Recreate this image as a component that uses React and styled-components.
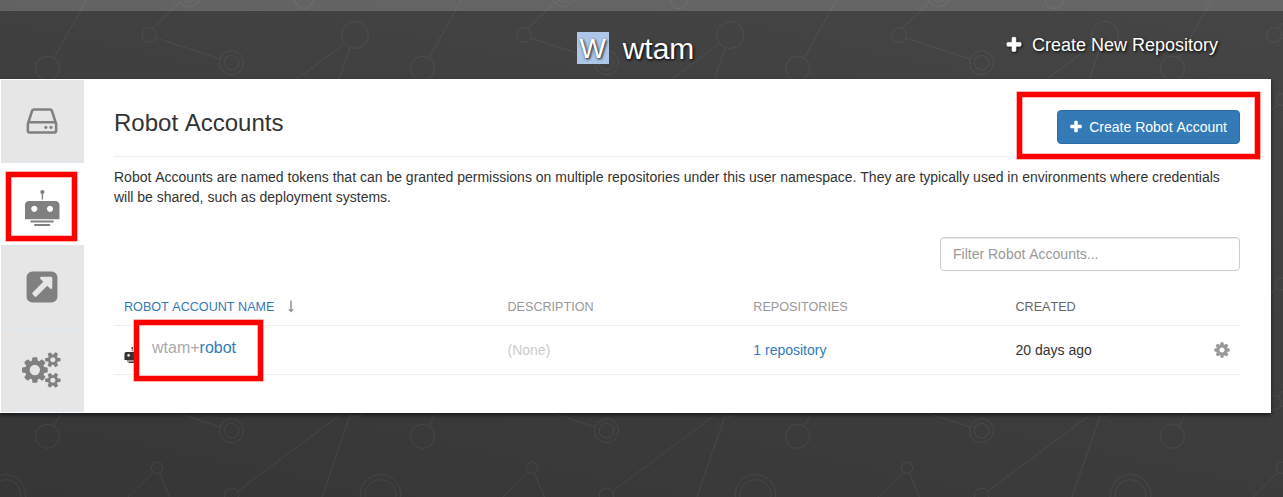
import React from "react";
import styled, { createGlobalStyle } from "styled-components";

const GlobalStyle = createGlobalStyle`
  * { box-sizing: border-box; }
  body {
    margin: 0;
    overflow: hidden;
    font: 14px/20px "Liberation Sans", Arial, sans-serif;
    font-kerning: none;
    color: #333;
    background: #3c3c3c;
  }
`;

const Page = styled.div`
  position: relative;
  height: 497px;
  overflow: hidden;
  background: linear-gradient(192deg, #454545 0%, #414141 32%, #363636 100%);
`;

const Backdrop = styled.svg`
  position: absolute;
  inset: 0;
  width: 100%;
  height: 100%;
  fill: none;
  stroke: rgba(255, 255, 255, 0.06);
`;

const Body = styled.div`
  position: relative;
`;

const TopStrip = styled.div`
  height: 11px;
  background: rgba(255, 255, 255, 0.18);
`;

const Header = styled.header`
  display: grid;
  grid-template-columns: 1fr auto 1fr;
  width: 1271px;
  height: 68px;
  color: #fff;
  text-shadow: 1px 1px 3px #000;
`;

const Title = styled.h1`
  grid-column: 2;
  display: flex;
  gap: 14px;
  margin: 0;
  padding-top: 21px;
  font-size: 30px;
  line-height: 34px;
  font-weight: 400;
`;

const Avatar = styled.span`
  width: 32px;
  height: 32px;
  background: #aec7e8;
  font-size: 28px;
  line-height: 33px;
  text-align: center;
`;

const CreateLink = styled.a`
  justify-self: end;
  display: flex;
  gap: 9px;
  align-items: center;
  height: 26px;
  margin: 21px 53px 0 0;
  font-size: 18px;
`;

const Glyph = styled.svg`
  display: block;
  flex: none;
  width: ${(p) => p.$w || p.$size}px;
  height: ${(p) => p.$size}px;
  fill: currentColor;
  overflow: visible;
  filter: ${(p) => (p.$shadow ? "drop-shadow(1px 1px 1px rgba(0,0,0,.8))" : "none")};
`;

const Panel = styled.main`
  display: flex;
  width: 1271px;
  height: 334px;
  background: #fff;
  box-shadow: 0 2px 4px rgba(0, 0, 0, 0.6);
`;

const Tabs = styled.nav`
  flex: none;
  width: 83px;
  margin: 1px 0 0 1px;
`;

const Tab = styled.div`
  position: relative;
  display: flex;
  align-items: center;
  justify-content: center;
  height: 83px;
  padding: ${(p) => (p.$active ? "7px" : 0)} 2px 0 0;
  color: #808080;
  background: ${(p) => (p.$active ? "#fff" : "#e6e6e6")};
  border-bottom: 1px solid #dde8f0;
`;

const Content = styled.section`
  width: 1126px;
  margin-left: 30px;
`;

const Heading = styled.div`
  display: flex;
  justify-content: space-between;
  height: 78px;
  padding-top: 31px;
  border-bottom: 1px solid #eee;
`;

const H2 = styled.h2`
  margin: 0;
  font-size: 24px;
  line-height: 26px;
  font-weight: 400;
`;

const Button = styled.button`
  display: flex;
  align-items: center;
  justify-content: flex-end;
  gap: 6px;
  width: 183px;
  height: 34px;
  padding: 0 12px;
  border: 1px solid #2e6da4;
  border-radius: 4px;
  background: #337ab7;
  color: #fff;
  font: inherit;
  font-kerning: none;
  white-space: nowrap;
`;

const Intro = styled.p`
  margin: 10px 0 0;
`;

const FilterRow = styled.div`
  display: flex;
  justify-content: flex-end;
  margin: 30px 0 19px;
`;

const Filter = styled.input`
  width: 300px;
  height: 34px;
  padding: 6px 12px;
  border: 1px solid #ccc;
  border-radius: 4px;
  box-shadow: inset 0 1px 1px rgba(0, 0, 0, 0.075);
  font: inherit;
  font-kerning: none;
  &::placeholder { color: #999; opacity: 1; }
`;

const Row = styled.div`
  position: relative;
  display: grid;
  grid-template-columns: 383.5px 245.8px 262.2px 1fr 27px;
  align-items: center;
  height: ${(p) => (p.$head ? 36 : 49)}px;
  padding-bottom: ${(p) => (p.$head ? 2 : 0)}px;
  border-bottom: 1px solid #eee;
  font-size: ${(p) => (p.$head ? 12.6 : 14)}px;
`;

const Cell = styled.div`
  display: flex;
  align-items: center;
  gap: 13px;
  padding-left: 10px;
  color: ${(p) => p.$color || "#333"};
`;

const SortMark = styled.span`
  color: #999;
`;

const RobotMark = styled.span`
  padding-top: 9px;
`;

const ActionCell = styled.div`
  color: #999;
`;

const Callout = styled.div`
  position: absolute;
  left: ${(p) => p.$x}px;
  top: ${(p) => p.$y}px;
  width: ${(p) => p.$w}px;
  height: ${(p) => p.$h}px;
  border: 5px solid #f00;
  box-shadow: 0 0 0 .6px rgba(255, 0, 0, .5), inset 0 0 0 .6px rgba(255, 0, 0, .5);
  pointer-events: none;
`;

const NameCallout = styled(Callout)`
  padding: 13px 0 0 13px;
  background: #fff;
  font-size: 16px;
  color: #aaa;
  span { color: #337ab7; }
`;

const paths = {
  plus: "M1600 736v192q0 40-28 68t-68 28h-416v416q0 40-28 68t-68 28h-192q-40 0-68-28t-28-68v-416h-416q-40 0-68-28t-28-68v-192q0-40 28-68t68-28h416v-416q0-40 28-68t68-28h192q40 0 68 28t28 68v416h416q40 0 68 28t28 68z",
  cog: "M1152 896q0-106-75-181t-181-75-181 75-75 181 75 181 181 75 181-75 75-181zm512-109v222q0 12-8 23t-20 13l-185 28q-19 54-39 91 35 50 107 138 10 12 10 25t-9 23q-27 37-99 108t-94 71q-12 0-26-9l-138-108q-44 23-91 38-16 136-29 186-7 28-36 28h-222q-14 0-24.5-8.5t-11.5-21.5l-28-184q-49-16-90-37l-141 107q-10 9-25 9-14 0-25-11-126-114-165-168-7-10-7-23 0-12 8-23 15-21 51-66.5t54-70.5q-27-50-41-99l-183-27q-13-2-21-12.5t-8-23.5v-222q0-12 8-23t19-13l186-28q14-46 39-92-40-57-107-138-10-12-10-24 0-10 9-23 26-36 98.5-107.5t94.5-71.5q13 0 26 10l138 107q44-23 91-38 16-136 29-186 7-28 36-28h222q14 0 24.5 8.5t11.5 21.5l28 184q49 16 90 37l142-107q9-9 24-9 13 0 25 10 129 119 165 170 7 8 7 22 0 12-8 23-15 21-51 66.5t-54 70.5q26 50 41 98l183 28q13 2 21 12.5t8 23.5z",
  external: "M1408 928v-480q0-26-19-45t-45-19h-480q-42 0-59 39-17 41 14 70l144 144-534 534q-19 19-19 45t19 45l102 102q19 19 45 19t45-19l534-534 144 144q18 19 45 19 12 0 25-5 39-17 39-59zm256-512v960q0 119-84.5 203.5t-203.5 84.5h-960q-119 0-203.5-84.5t-84.5-203.5v-960q0-119 84.5-203.5t203.5-84.5h960q119 0 203.5 84.5t84.5 203.5z",
  drive: "M1168 1216q0 33-23.5 56.5t-56.5 23.5-56.5-23.5-23.5-56.5 23.5-56.5 56.5-23.5 56.5 23.5 23.5 56.5zm256 0q0 33-23.5 56.5t-56.5 23.5-56.5-23.5-23.5-56.5 23.5-56.5 56.5-23.5 56.5 23.5 23.5 56.5zm112 160v-320q0-13-9.5-22.5t-22.5-9.5h-1216q-13 0-22.5 9.5t-9.5 22.5v320q0 13 9.5 22.5t22.5 9.5h1216q13 0 22.5-9.5t9.5-22.5zm-1230-480h1180l-157-482q-4-13-16-21.5t-26-8.5h-782q-14 0-26 8.5t-16 21.5zm1358 160v320q0 66-47 113t-113 47h-1216q-66 0-113-47t-47-113v-320q0-25 16-75l197-606q17-53 63-86t101-33h782q55 0 101 33t63 86l197 606q16 50 16 75z",
  cogs: "M832 896q0-106-75-181t-181-75-181 75-75 181 75 181 181 75 181-75 75-181zm768 512q0-52-38-90t-90-38-90 38-38 90q0 53 37.5 90.5t90.5 37.5 90.5-37.5 37.5-90.5zm0-1024q0-52-38-90t-90-38-90 38-38 90q0 53 37.5 90.5t90.5 37.5 90.5-37.5 37.5-90.5zm-384 421v185q0 10-7 19.5t-16 10.5l-155 24q-11 35-32 76 34 48 90 115 7 11 7 20 0 12-7 19-23 30-82.5 89.5t-78.5 59.5q-11 0-21-7l-115-90q-37 19-77 31-11 108-23 155-7 24-30 24h-186q-11 0-20-7.5t-10-17.5l-23-153q-34-10-75-31l-118 89q-7 7-20 7-11 0-21-8-144-133-144-160 0-9 7-19 10-14 41-53t47-61q-23-44-35-82l-152-24q-10-1-17-9.5t-7-19.5v-185q0-10 7-19.5t16-10.5l155-24q11-35 32-76-34-48-90-115-7-11-7-20 0-12 7-20 22-30 82-89t79-59q11 0 21 7l115 90q34-18 77-32 11-108 23-154 7-24 30-24h186q11 0 20 7.5t10 17.5l23 153q34 10 75 31l118-89q8-7 20-7 11 0 21 8 144 133 144 160 0 8-7 19-12 16-42 54t-45 60q23 48 34 82l152 23q10 2 17 10.5t7 19.5zm640 533v140q0 16-149 31-12 27-30 52 51 113 51 138 0 4-4 7-122 71-124 71-8 0-46-47t-52-68q-20 2-30 2t-30-2q-14 21-52 68t-46 47q-2 0-124-71-4-3-4-7 0-25 51-138-18-25-30-52-149-15-149-31v-140q0-16 149-31 13-29 30-52-51-113-51-138 0-4 4-7 4-2 35-20t59-34 30-16q8 0 46 46.5t52 67.5q20-2 30-2t30 2q51-71 92-112l6-2q4 0 124 70 4 3 4 7 0 25-51 138 17 23 30 52 149 15 149 31zm0-1024v140q0 16-149 31-12 27-30 52 51 113 51 138 0 4-4 7-122 71-124 71-8 0-46-47t-52-68q-20 2-30 2t-30-2q-14 21-52 68t-46 47q-2 0-124-71-4-3-4-7 0-25 51-138-18-25-30-52-149-15-149-31v-140q0-16 149-31 13-29 30-52-51-113-51-138 0-4 4-7 4-2 35-20t59-34 30-16q8 0 46 46.5t52 67.5q20-2 30-2t30 2q51-71 92-112l6-2q4 0 124 70 4 3 4 7 0 25-51 138 17 23 30 52 149 15 149 31z",
};

const Icon = ({ name, size, shadow }) => (
  <Glyph
    $size={size}
    $w={name === "cogs" ? (size * 1920) / 1792 : size}
    $shadow={shadow}
    viewBox={name === "cogs" ? "-64 0 1920 1792" : "0 0 1792 1792"}
  >
    <path
      d={paths[name]}
      stroke={name === "plus" ? "currentColor" : "none"}
      strokeWidth="70"
    />
  </Glyph>
);

const Robot = ({ size }) => (
  <Glyph $size={size} viewBox="0 0 36 36">
    <circle cx="18.4" cy="2" r="2.1" />
    <path d="M17.7 3h1.4v6.5h-1.4z" />
    <path
      fillRule="evenodd"
      d="M5 11h26q4.500 0 4.500 4.500V29.300H1V15.500Q1 11 5 11zM10.300 15.700a3.100 3.100 0 1 0 .01 0zM26 15.700a3.100 3.100 0 1 0 .01 0z"
    />
    <rect x="6.200" y="30.500" width="23.600" height="2" rx="1" />
    <rect x="10" y="33.900" width="16.300" height="2" rx="1" />
  </Glyph>
);

const ArrowDown = () => (
  <Glyph $size={13} $w={8} viewBox="0 0 8 13">
    <path d="M3.200.5h1.600v8.800h2.200L4 12.500 1 9.300h2.200z" />
  </Glyph>
);

const Network = () => (
  <Backdrop>
    <defs>
      <pattern id="network" width="375" height="368" patternUnits="userSpaceOnUse">
        <circle cx="47.500" cy="68.300" r="12" />
        <circle cx="149" cy="35" r="7.200" />
        <circle cx="231.500" cy="62.700" r="12" />
        <circle cx="231.500" cy="62.700" r="7.300" />
        <circle cx="355" cy="35" r="13.500" />
        <circle cx="157" cy="99.700" r="5.700" />
        <circle cx="231.500" cy="127.300" r="7.200" />
        <circle cx="5.500" cy="127" r="20.300" />
        <circle cx="5.500" cy="127" r="15.500" />
        <circle cx="380.500" cy="127" r="20.300" />
        <circle cx="380.500" cy="127" r="15.500" />
        <circle cx="188.500" cy="-5.500" r="12" />
        <circle cx="188.500" cy="-5.500" r="7.500" />
        <circle cx="304" cy="-.5" r="9" />
        <circle cx="156" cy="284" r="6" />
        <path d="M54 58L87-1M152.500 28.500L178 4M156 38l64 21M344 44L238 123M350 48l-28 81M153 104.500L128 129M159.500 105l10 24M151.500 288L142 297" />
      </pattern>
    </defs>
    <rect width="100%" height="100%" fill="url(#network)" stroke="none" />
  </Backdrop>
);

export default function App() {
  return (
    <>
      <GlobalStyle />
      <Page>
        <Network />
        <Body>
          <TopStrip />
          <Header>
            <Title>
              <Avatar>W</Avatar>
              wtam
            </Title>
            <CreateLink>
              <Icon name="plus" size={18} shadow />
              Create New Repository
            </CreateLink>
          </Header>
          <Panel>
            <Tabs>
              <Tab><Icon name="drive" size={36} /></Tab>
              <Tab $active>
                <Robot size={36} />
                <Callout $x={5} $y={9} $w={71} $h={69} />
              </Tab>
              <Tab><Icon name="external" size={36} /></Tab>
              <Tab><Icon name="cogs" size={36} /></Tab>
            </Tabs>
            <Content>
              <Heading>
                <H2>Robot Accounts</H2>
                <Button>
                  <Icon name="plus" size={14} />
                  Create Robot Account
                </Button>
              </Heading>
              <Intro>
                Robot Accounts are named tokens that can be granted permissions on multiple
                repositories under this user namespace. They are typically used in environments
                where credentials will be shared, such as deployment systems.
              </Intro>
              <FilterRow>
                <Filter placeholder="Filter Robot Accounts..." />
              </FilterRow>
              <Row $head>
                <Cell $color="#337ab7">
                  ROBOT ACCOUNT NAME
                  <SortMark><ArrowDown /></SortMark>
                </Cell>
                <Cell $color="#999">DESCRIPTION</Cell>
                <Cell $color="#999">REPOSITORIES</Cell>
                <Cell $color="#666">CREATED</Cell>
              </Row>
              <Row>
                <Cell>
                  <RobotMark><Robot size={16} /></RobotMark>
                  <NameCallout $x={20} $y={-6} $w={129} $h={61}>
                    wtam+<span>robot</span>
                  </NameCallout>
                </Cell>
                <Cell $color="#ccc">(None)</Cell>
                <Cell $color="#337ab7">1 repository</Cell>
                <Cell>20 days ago</Cell>
                <ActionCell><Icon name="cog" size={18} /></ActionCell>
              </Row>
            </Content>
          </Panel>
          <Callout $x={1017} $y={92} $w={243} $h={67} />
        </Body>
      </Page>
    </>
  );
}
